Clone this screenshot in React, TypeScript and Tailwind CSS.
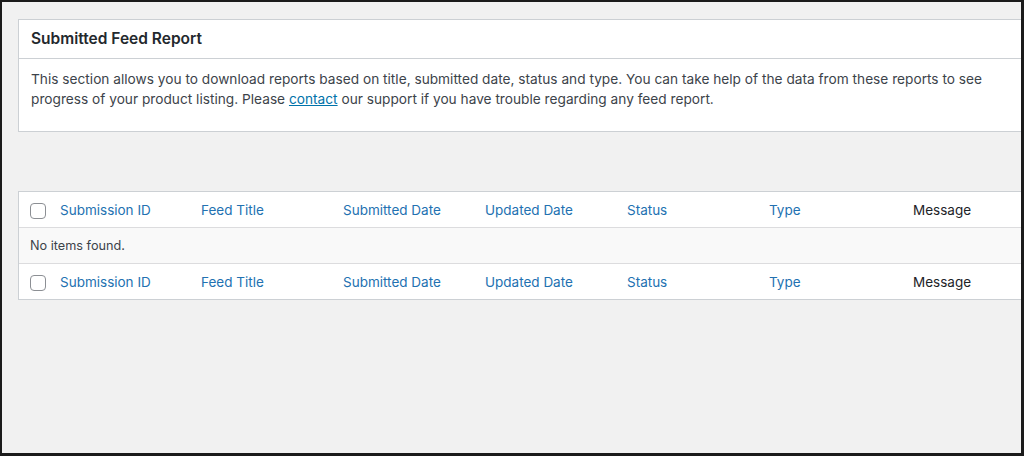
export default function App() {
  const cols = ['Submission ID', 'Feed Title', 'Submitted Date', 'Updated Date', 'Status', 'Type']

  const headRow = (
    <div className="grid h-[35px] grid-cols-[31px_141px_142px_142px_142px_142px_144px_1fr] items-center pt-[2px] text-[13.5px]">
      <div className="flex pl-[11px]">
        <span className="block h-4 w-4 rounded-[4px] border border-[#8c8f94] bg-white" />
      </div>
      {cols.map((c) => (
        <div key={c} className="pl-[10px] text-[#2271b1]">
          {c}
        </div>
      ))}
      <div className="pl-[10px] text-[#1d2327]">Message</div>
    </div>
  )

  return (
    <div
      className="h-[456px] w-[1024px] overflow-hidden border-t-2 border-r-[3px] border-b-[3px] border-l-2 border-[#1b1b1b]"
      style={{ fontFamily: 'Inter, "Noto Sans", sans-serif' }}
    >
      <div className="h-full w-full overflow-hidden bg-[#f1f1f1] pt-[17px] pl-4">
        <div className="w-[1010px] border border-[#ccd0d4] bg-white">
          <div className="flex h-[39px] items-center border-b border-[#ccd0d4] px-3">
            <h2 className="text-[15.5px] font-semibold text-[#23282d]">Submitted Feed Report</h2>
          </div>
          <div className="h-[72px] px-3 pt-[11px] text-[13.7px] leading-[19.5px] text-[#3c434a]">
            <p>
              This section allows you to download reports based on title, submitted date, status and type. You can take help of the data from these reports to see
              <br />
              progress of your product listing. Please{' '}
              <a href="#" className="text-[#0073aa] underline">
                contact
              </a>{' '}
              our support if you have trouble regarding any feed report.
            </p>
          </div>
        </div>

        <div className="mt-[59px] w-[1010px] border border-[#ccd0d4] bg-white">
          {headRow}
          <div className="flex h-[37px] items-center border-y border-[#dcdcde] bg-[#f9f9f9] pl-[11px] text-[12.7px] text-[#3c434a]">
            No items found.
          </div>
          {headRow}
        </div>
      </div>
    </div>
  )
}
